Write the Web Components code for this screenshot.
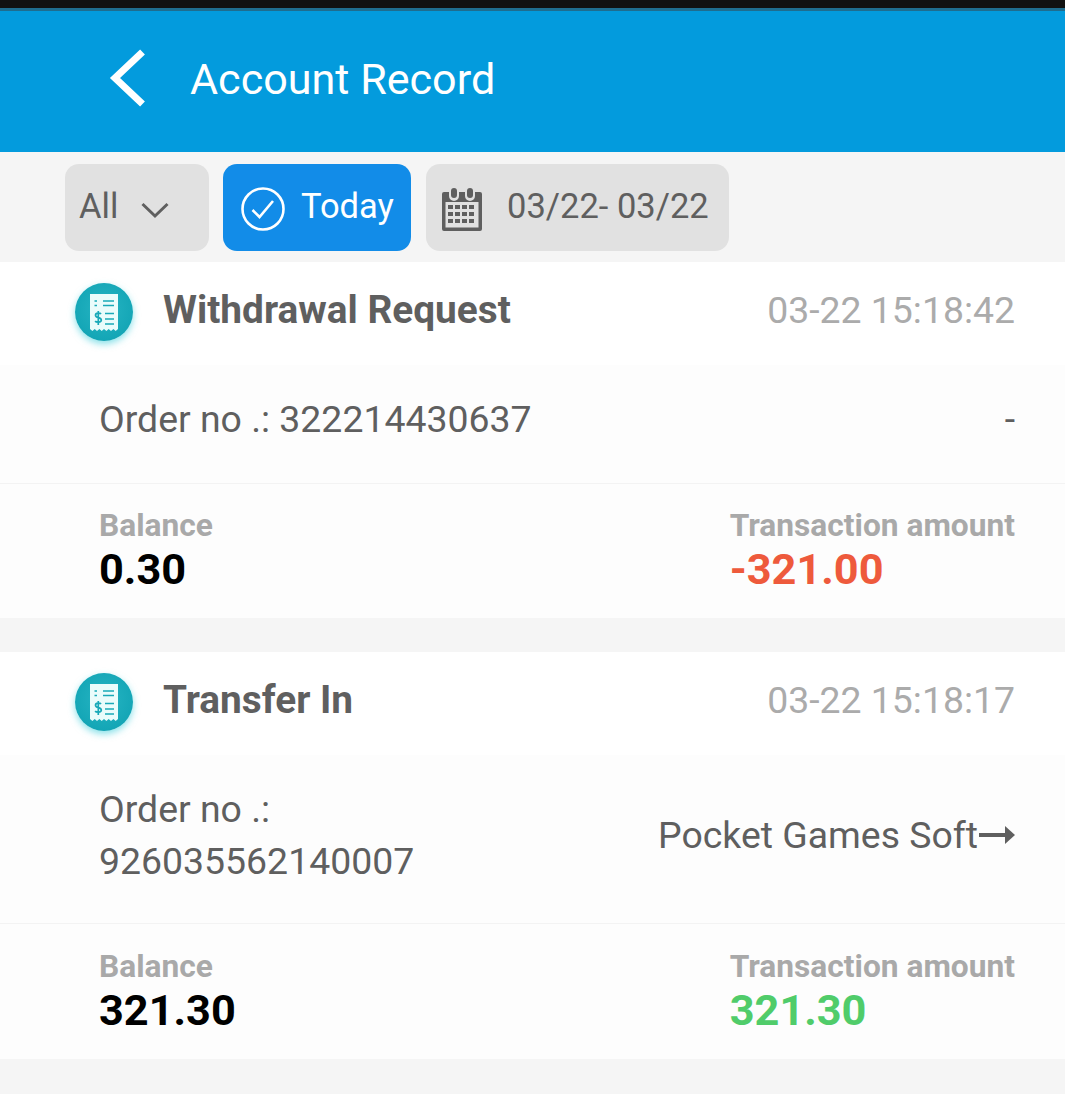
<!DOCTYPE html>
<html>
<head>
<meta charset="utf-8">
<style>
  html, body { margin: 0; padding: 0; }
  body {
    font-family: Roboto, "Liberation Sans", sans-serif;
    width: 1065px;
    height: 1098px;
    overflow: hidden;
    background: linear-gradient(#f5f5f5 1094px, #fff 1094px);
  }
</style>
</head>
<body>
<app-header>Account Record</app-header>
<filter-bar></filter-bar>
<record-card title="Withdrawal Request" time="03-22 15:18:42" order="322214430637" dest="-" balance="0.30" amount="-321.00" tone="minus"></record-card>
<record-card title="Transfer In" time="03-22 15:18:17" order="926035562140007" dest="Pocket Games Soft" arrow wrap balance="321.30" amount="321.30" tone="plus"></record-card>

<script>
const appHeaderTemplate = document.createElement("template");
appHeaderTemplate.innerHTML = `
  <style>
    :host {
      display: block;
      background: #039bdd;
    }
    .status {
      height: 8px;
      background: #111;
    }
    .edge {
      height: 3px;
      background: #1f6d8f;
    }
    .bar {
      display: flex;
      align-items: center;
      height: 141px;
      padding-left: 109px;
      padding-bottom: 5px;
      box-sizing: border-box;
      color: #fff;
      font-size: 43.1px;
    }
    svg { display: block; margin-right: 44px; margin-top: -3px; }
  </style>
  <div class="status"></div>
  <div class="edge"></div>
  <div class="bar">
    <svg width="37" height="58" viewBox="0 0 37 58">
      <path d="M33.5 3 L6 29 L33.5 55" fill="none" stroke="#fff" stroke-width="7"/>
    </svg>
    <slot></slot>
  </div>
`;

class AppHeader extends HTMLElement {
  constructor() {
    super();
    this.attachShadow({ mode: "open" }).appendChild(appHeaderTemplate.content.cloneNode(true));
  }
}
customElements.define("app-header", AppHeader);

const filterBarTemplate = document.createElement("template");
filterBarTemplate.innerHTML = `
  <style>
    :host {
      display: flex;
      height: 110px;
      box-sizing: border-box;
      padding: 12px 0 11px 65px;
      gap: 14px;
      background: #f5f5f5;
      font-size: 34.5px;
      color: #5f5f5f;
    }
    .chip {
      display: flex;
      align-items: center;
      box-sizing: border-box;
      height: 87px;
      border-radius: 14px;
      background: #e1e1e1;
      padding-bottom: 4px;
    }
    .all { width: 144px; padding-left: 14px; }
    .all svg { margin-left: 23px; margin-top: 9px; }
    .today { width: 188px; padding-left: 18px; background: #128ce8; color: #fff; }
    .today svg { margin-right: 16px; margin-top: 6px; }
    .date { width: 303px; padding-left: 16px; margin-left: 1px; }
    .date svg { margin-right: 25px; margin-top: 6px; }
    svg { display: block; flex: none; }
  </style>
  <div class="chip all">
    <span>All</span>
    <svg width="28" height="17" viewBox="0 0 28 17">
      <path d="M1.5 2 L14 14 L26.5 2" fill="none" stroke="#5f5f5f" stroke-width="3"/>
    </svg>
  </div>
  <div class="chip today">
    <svg width="44" height="44" viewBox="0 0 44 44" fill="none" stroke="#fff">
      <circle cx="22" cy="22" r="20.5" stroke-width="2.6"/>
      <path d="M11.5 23 L18.5 30 L32 14" stroke-width="2.6"/>
    </svg>
    <span>Today</span>
  </div>
  <div class="chip date">
    <svg width="40" height="44" viewBox="0 0 40 44">
      <path fill="#5f5f5f" d="M2 5h5v4a5 5 0 0 0 10 0V5h6v4a5 5 0 0 0 10 0V5h5a2 2 0 0 1 2 2v35a2 2 0 0 1-2 2H2a2 2 0 0 1-2-2V7a2 2 0 0 1 2-2z"/>
      <rect x="3.5" y="15" width="33" height="25.500" fill="#e1e1e1"/>
      <rect x="9" y="1" width="6" height="10" rx="3" fill="#5f5f5f"/>
      <rect x="25" y="1" width="6" height="10" rx="3" fill="#5f5f5f"/>
      <g fill="#5f5f5f">
        <rect x="6" y="18" width="5" height="4"/><rect x="13" y="18" width="5" height="4"/><rect x="20" y="18" width="5" height="4"/><rect x="27" y="18" width="5" height="4"/>
        <rect x="6" y="25" width="5" height="4"/><rect x="13" y="25" width="5" height="4"/><rect x="20" y="25" width="5" height="4"/><rect x="27" y="25" width="5" height="4"/>
        <rect x="6" y="32" width="5" height="4"/><rect x="13" y="32" width="5" height="4"/><rect x="20" y="32" width="5" height="4"/><rect x="27" y="32" width="5" height="4"/>
      </g>
    </svg>
    <span>03/22- 03/22</span>
  </div>
`;

class FilterBar extends HTMLElement {
  constructor() {
    super();
    this.attachShadow({ mode: "open" }).appendChild(filterBarTemplate.content.cloneNode(true));
  }
}
customElements.define("filter-bar", FilterBar);

const recordCardTemplate = document.createElement("template");
recordCardTemplate.innerHTML = `
  <style>
    :host {
      display: block;
      background: #fdfdfd;
      margin-bottom: 34px;
      color: #5f5f5f;
    }
    .head {
      display: flex;
      align-items: center;
      height: 103px;
      padding: 0 50px 8px 75px;
      box-sizing: border-box;
      background: #fff;
    }
    .icon {
      width: 58px;
      height: 58px;
      flex: none;
      margin-top: 5px;
      border-radius: 50%;
      background: radial-gradient(circle at 50% 45%, #27b5c3, #14a6b6 70%, #0f9bac);
      box-shadow: 0 3px 7px rgba(40, 200, 215, 0.55);
      display: flex;
      align-items: center;
      justify-content: center;
    }
    .title {
      margin-left: 30px;
      flex: 1;
      font-size: 38.8px;
      font-weight: 700;
    }
    .time { font-size: 37.4px; color: #ababab; }
    .order {
      display: flex;
      align-items: center;
      justify-content: space-between;
      padding: 0 50px 11px 99px;
      height: 119px;
      box-sizing: border-box;
      border-bottom: 1px solid #f3f3f3;
      font-size: 37.4px;
      line-height: 52px;
    }
    :host([wrap]) .order { height: 169px; padding-bottom: 8px; }
    :host([wrap]) .no { width: 340px; }
    .dest { display: flex; align-items: center; }
    .dest svg { display: none; margin-left: 1px; }
    :host([arrow]) .dest svg { display: block; }
    .foot {
      display: flex;
      justify-content: space-between;
      height: 134px;
      padding: 24px 50px 0 99px;
      box-sizing: border-box;
    }
    :host([wrap]) .foot { height: 135px; padding-top: 25px; }
    .label {
      font-size: 31.7px;
      font-weight: 700;
      color: #a9a9a9;
      line-height: 36px;
    }
    .value {
      font-size: 43.300px;
      font-weight: 700;
      color: #000;
      line-height: 52px;
    }
    .right .value { color: #ee5a3c; }
    :host([tone="plus"]) .right .value { color: #50cc6a; }
  </style>
  <div class="head">
    <div class="icon">
      <svg width="28" height="37" viewBox="0 0 28 37">
        <path fill="#eafcfb" d="M0 0h28v35l-2.300 2-2.300-2-2.400 2-2.300-2-2.300 2-2.400-2-2.300 2-2.300-2-2.400 2-2.300-2-2.300 2-2.400-2z"/>
        <g fill="none" stroke="#19a9b8" stroke-width="1.600">
          <path d="M4.500 7h2.500M4.500 11.500h2.500M13 7h11M13 11.500h11M15 19.500h9M15 25h9M15 30h9"/>
          <path d="M11 20c-.8-1.200-5.500-1.600-5.500 1.200 0 3.200 5.800 1.600 5.800 4.800 0 2.800-5 2.500-6.200 1.100M8.300 17v14" stroke-width="1.700"/>
        </g>
      </svg>
    </div>
    <div class="title"></div>
    <div class="time"></div>
  </div>
  <div class="order">
    <div class="no"></div>
    <div class="dest">
      <span class="dest-text"></span>
      <svg width="36" height="20" viewBox="0 0 36 20">
        <path d="M0 10h27" stroke="#5f5f5f" stroke-width="4"/>
        <path d="M26 1l10 9-10 9z" fill="#5f5f5f"/>
      </svg>
    </div>
  </div>
  <div class="foot">
    <div>
      <div class="label">Balance</div>
      <div class="value balance"></div>
    </div>
    <div class="right">
      <div class="label">Transaction amount</div>
      <div class="value amount"></div>
    </div>
  </div>
`;

class RecordCard extends HTMLElement {
  constructor() {
    super();
    this._root = this.attachShadow({ mode: "open" });
    this._root.appendChild(recordCardTemplate.content.cloneNode(true));
  }

  connectedCallback() {
    this.render();
  }

  render() {
    const set = (sel, val) => (this._root.querySelector(sel).textContent = val);
    set(".title", this.getAttribute("title"));
    set(".time", this.getAttribute("time"));
    set(".no", "Order no .: " + this.getAttribute("order"));
    set(".dest-text", this.getAttribute("dest"));
    set(".balance", this.getAttribute("balance"));
    set(".amount", this.getAttribute("amount"));
  }
}
customElements.define("record-card", RecordCard);
</script>
</body>
</html>
